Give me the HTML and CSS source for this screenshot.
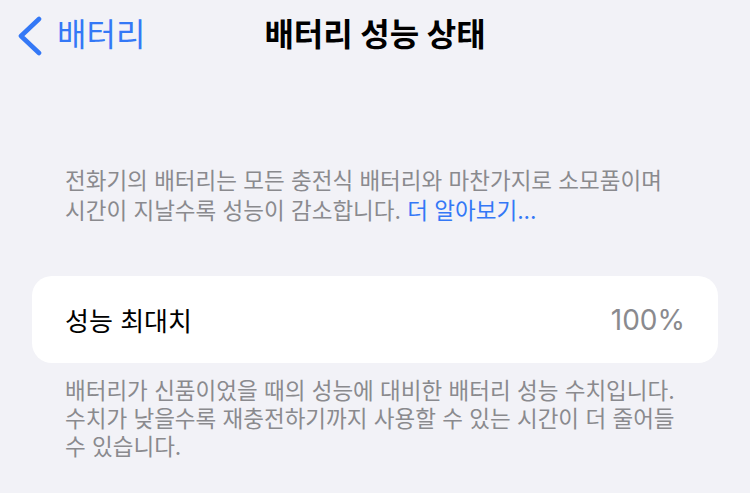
FILE: index.html
```html
<!DOCTYPE html>
<html lang="ko">
<head>
<meta charset="utf-8">
<link rel="stylesheet" href="styles.css">
</head>
<body>
<header class="nav">
  <a class="back">
    <svg class="chev" width="26" height="40" viewBox="0 0 26 40"><path d="M22 3 L4 20 L22 37" fill="none" stroke="#3478f6" stroke-width="4.6" stroke-linecap="round" stroke-linejoin="round"/></svg>
    <span class="back-label">배터리</span>
  </a>
  <h1 class="title">배터리 성능 상태</h1>
  <div></div>
</header>
<p class="desc">전화기의 배터리는 모든 충전식 배터리와 마찬가지로 소모품이며<br>시간이 지날수록 성능이 감소합니다. <span class="link">더 알아보기...</span></p>
<div class="card">
  <span class="label">성능 최대치</span>
  <span class="value">100%</span>
</div>
<p class="foot">배터리가 신품이었을 때의 성능에 대비한 배터리 성능 수치입니다.<br>수치가 낮을수록 재충전하기까지 사용할 수 있는 시간이 더 줄어들<br>수 있습니다.</p>
</body>
</html>
```
FILE: styles.css
```css
html, body {
  margin: 0;
  padding: 0;
  background: #f2f2f7;
}
body {
  font-family: "Inter", "Noto Sans CJK KR", sans-serif;
  width: 750px;
  height: 493px;
  overflow: hidden;
}
.nav {
  height: 70px;
  display: grid;
  grid-template-columns: 1fr auto 1fr;
  align-items: center;
}
.back {
  display: flex;
  align-items: center;
  gap: 14px;
  padding-left: 17px;
  color: #3478f6;
}
.chev {
  display: block;
  margin-top: 2px;
}
.back-label {
  font-size: 32px;
  line-height: 40px;
}
.title {
  margin: 0;
  font-size: 32px;
  font-weight: 700;
  color: #000;
  line-height: 40px;
}
.desc {
  margin: 96px 20px 0 65px;
  font-size: 22.5px;
  line-height: 30px;
  color: #8a8a8e;
  white-space: nowrap;
}
.link {
  color: #3478f6;
}
.card {
  margin: 50px 32px 0 32px;
  height: 87px;
  background: #fff;
  border-radius: 20px;
  padding: 0 33px;
  display: flex;
  align-items: center;
  justify-content: space-between;
}
.label {
  font-size: 26px;
  color: #000;
}
.value {
  font-size: 28px;
  color: #8a8a8e;
}
.foot {
  margin: 14px 20px 0 65px;
  font-size: 22.5px;
  line-height: 28px;
  color: #8a8a8e;
  white-space: nowrap;
}
```
